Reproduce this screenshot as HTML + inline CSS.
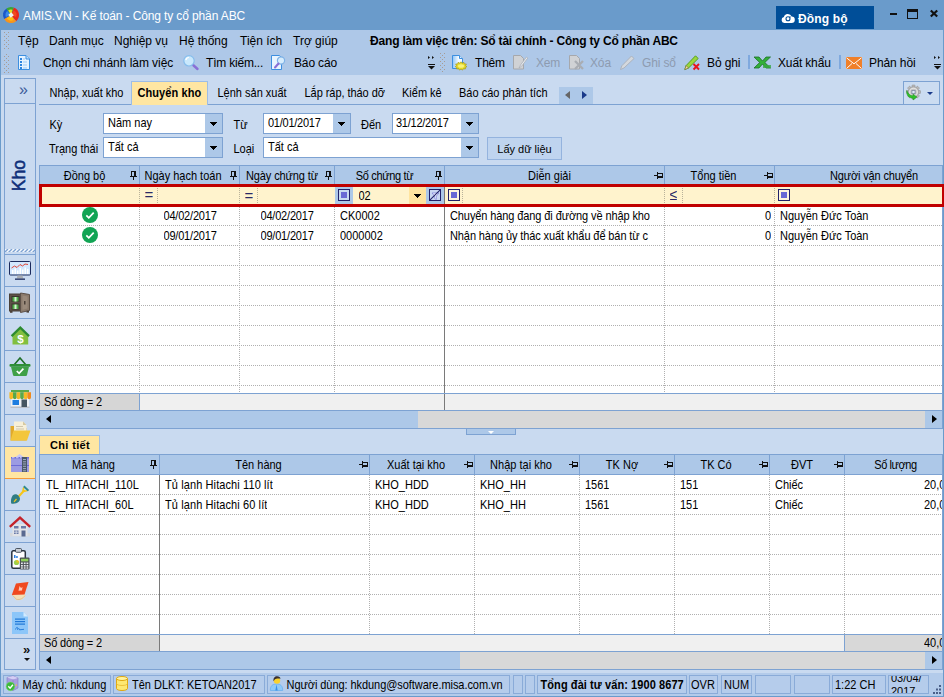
<!DOCTYPE html>
<html><head><meta charset="utf-8"><title>AMIS.VN</title>
<style>
*{box-sizing:border-box;margin:0;padding:0}
html,body{width:944px;height:697px;overflow:hidden}
body{position:relative;background:#6a9bcb;font-family:"Liberation Sans","DejaVu Sans",sans-serif;font-size:12px;color:#000}
.a{position:absolute}
svg{position:absolute;overflow:visible}
.t{position:absolute;white-space:nowrap;line-height:1}
.m{position:absolute;white-space:nowrap;top:30px;height:22px;line-height:22px;font-size:12px;color:#000}
.tb{position:absolute;white-space:nowrap;top:52px;height:22px;line-height:22px;font-size:12px;color:#000}
.tb.g{color:#8d9bb0}
.tab{position:absolute;white-space:nowrap;top:82px;height:22px;line-height:22px;font-size:11px;color:#000}
.lbl{position:absolute;white-space:nowrap;height:20px;line-height:20px;font-size:11px;color:#000}
.inp{position:absolute;height:21px;background:#fff;border:1px solid #7da2d2;font-size:11px;line-height:17px;padding-left:4px;white-space:nowrap}
.dd{position:absolute;right:0;top:0;width:17px;height:19px;background:#adc8e8}
.dd:after,.arr{content:"";position:absolute;left:5px;top:8px;width:7px;height:4px;background:#000;clip-path:polygon(0 0,7px 0,7px 1px,6px 1px,6px 2px,5px 2px,5px 3px,4px 3px,4px 4px,3px 4px,3px 3px,2px 3px,2px 2px,1px 2px,1px 1px,0 1px)}
.h{position:absolute;white-space:nowrap;height:21px;line-height:19px;font-size:11px;text-align:center;background:#adc8e8;border:1px solid #7da2d2;border-left:0;color:#000}
.c{position:absolute;white-space:nowrap;height:19px;line-height:20px;font-size:11px;color:#000;overflow:hidden}
.st{position:absolute;white-space:nowrap;top:675px;height:19px;line-height:18px;font-size:11px;color:#000;border:1px solid #8aabd8;background:#b5cceb;padding-left:3px;overflow:hidden}
.pin{width:7px;height:9px;top:5px;right:2px}
.pinh{width:9px;height:7px;top:6px;right:1px}
.vl{position:absolute;width:1px;background-image:linear-gradient(#b0b0b0 50%,transparent 50%);background-size:1px 2px;background-position:0 1px}
.hl{position:absolute;height:1px;background-image:linear-gradient(90deg,#b0b0b0 50%,transparent 50%);background-size:2px 1px;background-position:1px 0}
.x{display:inline-block;transform:translateY(.5px) scaleY(1.1)}
.c,.lbl,.tab{transform:translateY(.5px) scaleY(1.1)}
.st .x{transform:scaleY(1.1)}
.p0{background-position:0 0!important}
.sep{position:absolute;left:5px;width:30px;height:1px;background:#7da2d2}
</style></head><body>
<div class="a" style="left:0;top:0;width:944px;height:30px;background:#6a9bcb"></div>
<div class="a" style="left:1px;top:30px;width:942px;height:45px;background:#aec8e8"></div>
<div class="a" style="left:1px;top:75px;width:942px;height:598px;background:#c9daf0"></div>
<div class="a" style="left:1px;top:673px;width:942px;height:23px;background:#b3cbea"></div>

<svg style="left:3px;top:7px" width="16" height="16" viewBox="-8 -8 16 16"><path d="M0 0L2.74 -7.52 A8 8 0 0 1 5.14 6.13 Z" fill="#e8281c"/><path d="M0 0L5.14 6.13 A8 8 0 0 1 -6.93 4.00 Z" fill="#f7941d"/><path d="M0 0L-6.93 4.00 A8 8 0 0 1 -4.59 -6.55 Z" fill="#1c57c8"/><path d="M0 0L-4.59 -6.55 A8 8 0 0 1 2.74 -7.52 Z" fill="#3aa635"/><path d="M0 0L2.75 -4.76 A5.5 5.5 0 0 1 5.17 1.88 Z" fill="#f04a1e"/><path d="M0 0L2.75 4.76 A5.5 5.5 0 0 1 -4.21 3.54 Z" fill="#fdc010"/><path d="M0 0L-5.17 1.88 A5.5 5.5 0 0 1 -3.89 -3.89 Z" fill="#3a8ae8"/><path d="M0 0L-2.75 -4.76 A5.5 5.5 0 0 1 1.42 -5.31 Z" fill="#e8e020"/><path d="M-2.600 -.3L.3 -2.800 2.800 .3 -.3 2.800Z" fill="#f2f2f2"/></svg>
<div class="t" style="left:23px;top:1px;height:31px;line-height:31px;font-size:12px;color:#fff;letter-spacing:-.12px">AMIS.VN - Kế toán - Công ty cổ phần ABC</div>
<div class="a" style="left:776px;top:6px;width:98px;height:23px;background:#004e98"></div>
<svg style="left:781px;top:13px" width="14" height="10" viewBox="0 0 14 10"><path d="M3.300 10a3 3 0 0 1-.4-5.900A4 4 0 0 1 10.600 3.600a3.200 3.200 0 0 1 0 6.400Z" fill="#fff"/><circle cx="7" cy="5.800" r="2" fill="none" stroke="#004e98" stroke-width="1.100"/><path d="M8.200 3.200l1.600.3-.6 1.500Z" fill="#004e98"/></svg>
<div class="t" style="left:798px;top:7px;height:23px;line-height:24px;font-size:12px;font-weight:bold;color:#fff;letter-spacing:.15px">Đồng bộ</div>
<div class="a" style="left:890px;top:13px;width:7px;height:2px;background:#111"></div>
<div class="a" style="left:907px;top:9px;width:11px;height:10px;border:1.500px solid #111;border-top-width:3px"></div>
<svg style="left:930px;top:10px" width="8" height="7" viewBox="0 0 8 7"><path d="M.8.500l6.400 6M7.200.500l-6.400 6" stroke="#111" stroke-width="2.200"/></svg>

<svg style="left:4px;top:32px" width="6" height="42" viewBox="0 0 6 42"><defs><pattern id="gp" width="4" height="4" patternUnits="userSpaceOnUse"><rect x="0" y="0" width="1" height="1" fill="#a79c94"/><rect x="2" y="2" width="1" height="1" fill="#a79c94"/></pattern></defs><rect x="0" y="0" width="6" height="18" fill="url(#gp)"/><rect x="0" y="21" width="6" height="20" fill="url(#gp)"/></svg>
<div class="m" style="left:18px">Tệp</div>
<div class="m" style="left:49px">Danh mục</div>
<div class="m" style="left:114px">Nghiệp vụ</div>
<div class="m" style="left:179px">Hệ thống</div>
<div class="m" style="left:240px">Tiện ích</div>
<div class="m" style="left:293px">Trợ giúp</div>
<div class="m" style="left:370px;font-weight:bold;letter-spacing:-.18px">Đang làm việc trên: Sổ tài chính - Công ty Cổ phần ABC</div>
<svg style="left:18px;top:55px" width="12" height="15" viewBox="0 0 12 15"><path d="M.5.500h7.500l3.500 3.500v10.500h-11Z" fill="#e6f3ff" stroke="#3d8fe0"/><path d="M8 .500v3.500h3.500" fill="#bfe0ff" stroke="#3d8fe0"/><g fill="#2f86e0"><rect x="2" y="3" width="2" height="2"/><rect x="2" y="6" width="2" height="2"/><rect x="2" y="9" width="2" height="2"/><rect x="2" y="12" width="2" height="2"/></g><g fill="#9ccaf5"><rect x="5" y="6.500" width="4" height="1"/><rect x="5" y="9.500" width="4" height="1"/><rect x="5" y="12.500" width="4" height="1"/><rect x="5" y="3.500" width="2" height="1"/></g></svg>
<div class="tb" style="left:43px;letter-spacing:-.05px">Chọn chi nhánh làm việc</div>
<svg style="left:183px;top:55px" width="16" height="15" viewBox="0 0 16 15"><path d="M9.500 9.500l5 4.500" stroke="#8a6fd6" stroke-width="2.400" stroke-linecap="round"/><circle cx="6" cy="5.800" r="5.200" fill="#c9e8fc" stroke="#86bdec" stroke-width="1.200"/><path d="M2.800 5a3.400 3.400 0 0 1 3-2.600" stroke="#fff" stroke-width="1.400" fill="none"/></svg>
<div class="tb" style="left:206px;letter-spacing:-.2px">Tìm kiếm...</div>
<svg style="left:271px;top:55px" width="15" height="15" viewBox="0 0 15 15"><path d="M.5.500h8l2 2v12h-10Z" fill="#e8f4ff" stroke="#3d8fe0"/><circle cx="10" cy="5.500" r="3.600" fill="#d6ecfc" stroke="#7fb2e6" stroke-width="1.200"/><path d="M7.500 8.500l-3.500 4" stroke="#8a6fd6" stroke-width="2" stroke-linecap="round"/></svg>
<div class="tb" style="left:294px;letter-spacing:-.15px">Báo cáo</div>
<svg style="left:427px;top:56px" width="9" height="14" viewBox="0 0 9 14"><path d="M1 0l2 1.500-2 1.500ZM5 0l2 1.500-2 1.500Z" fill="#111"/><rect x="1" y="8" width="7" height="1" fill="#111"/><path d="M1 10h7l-3.500 3.500Z" fill="#111"/></svg>
<svg style="left:440px;top:53px" width="5" height="20" viewBox="0 0 5 20"><rect width="5" height="20" fill="url(#gp)"/></svg>
<svg style="left:452px;top:55px" width="16" height="15" viewBox="0 0 16 15"><defs><linearGradient id="dg" x1="0" x2="1" y1="0" y2="0"><stop offset="0" stop-color="#8cc4f8"/><stop offset=".6" stop-color="#f4faff"/></linearGradient></defs><path d="M.5.500h7l3 3v10h-10Z" fill="url(#dg)" stroke="#3d8fe0"/><path d="M7.500.500v3h3" fill="#d6ebff" stroke="#3d8fe0"/><path d="M9 6.800l1.200 1.400 1.700-.9.300 1.600 2.200.1-.9 1.500 1.400 1.200-1.800.7.300 1.600-2-.3-.9 1.400-1.500-1.100-1.500 1.100-.9-1.400-2 .3.300-1.600-1.800-.7 1.400-1.200-.9-1.500 2.200-.1.300-1.600 1.700.9Z" fill="#e6dc2a" stroke="#a89812" stroke-width=".7"/><ellipse cx="9" cy="11" rx="3" ry="1.800" fill="#f8f27a"/></svg>
<div class="tb" style="left:475px;letter-spacing:-.2px">Thêm</div>
<svg style="left:513px;top:55px" width="15" height="15" viewBox="0 0 15 15"><path d="M.5.500h7l3 3v10.500h-10Z" fill="#d0d2d5" stroke="#a6a8ac"/><path d="M13.500 2l-6 8-1.500 3 2.800-2 6-8Z" fill="#e9ecef" stroke="#a9afb8" stroke-width=".8"/></svg>
<div class="tb g" style="left:536px;letter-spacing:-.2px">Xem</div>
<svg style="left:569px;top:55px" width="15" height="15" viewBox="0 0 15 15"><path d="M.5.500h7l3 3v10.500h-10Z" fill="#d0d2d5" stroke="#a6a8ac"/><path d="M6 6l8 8M14 6l-8 8" stroke="#a9adb3" stroke-width="2.300"/></svg>
<div class="tb g" style="left:590px;letter-spacing:-.15px">Xóa</div>
<svg style="left:619px;top:55px" width="16" height="15" viewBox="0 0 16 15"><path d="M12.500 1l2.500 2.500-10 9.500-3.500 1.500 1.300-3.700Z" fill="#d4d8dd" stroke="#a9afb8" stroke-width=".9"/></svg>
<div class="tb g" style="left:642px;letter-spacing:-.15px">Ghi sổ</div>
<svg style="left:684px;top:55px" width="16" height="15" viewBox="0 0 16 15"><path d="M11.500.800l2.700 2.700-9.700 9.500-3.700 1.500 1.300-3.900Z" fill="#9bd63c" stroke="#4e9a16" stroke-width=".9"/><path d="M.8 14.500l1.300-3.900 2.400 2.400Z" fill="#f4dca0" stroke="#6b5a2a" stroke-width=".5"/><path d="M9.500 9l5.500 5.500M15 9l-5.500 5.500" stroke="#e8141c" stroke-width="1.900"/></svg>
<div class="tb" style="left:707px;letter-spacing:-.1px">Bỏ ghi</div>
<div class="a" style="left:748px;top:55px;width:2px;height:14px;background:#7fa9de"></div>
<svg style="left:754px;top:56px" width="17" height="13" viewBox="0 0 17 13"><path d="M0 1h5l3.500 4L12 1h4.500l-5.700 5.500 5.700 5.500H12L8.500 8 5 12H0l5.700-5.500Z" fill="#33b03a" stroke="#1b6e24" stroke-width=".8"/><path d="M9 9h8v3H9Z" fill="#3aa845" opacity=".8"/></svg>
<div class="tb" style="left:778px;letter-spacing:-.15px">Xuất khẩu</div>
<div class="a" style="left:839px;top:55px;width:2px;height:14px;background:#7fa9de"></div>
<svg style="left:846px;top:57px" width="16" height="12" viewBox="0 0 16 12"><rect width="16" height="12" fill="#f0802a"/><path d="M.5.800l7.500 6 7.500-6M.5 11.500l5.500-5M15.500 11.500l-5.500-5" stroke="#fff" stroke-width="1" fill="none"/></svg>
<div class="tb" style="left:869px;letter-spacing:-.1px">Phản hồi</div>
<svg style="left:933px;top:56px" width="9" height="14" viewBox="0 0 9 14"><path d="M1 0l2 1.500-2 1.500ZM5 0l2 1.500-2 1.500Z" fill="#111"/><rect x="1" y="8" width="7" height="1" fill="#111"/><path d="M1 10h7l-3.500 3.500Z" fill="#111"/></svg>

<div class="a" style="left:39px;top:104px;width:865px;height:1px;background:#7da2d2"></div>
<div class="tab" style="left:49.500px;top:81px">Nhập, xuất kho</div>
<div class="a" style="left:131px;top:81px;width:77px;height:24px;background:#ffe6a2;border:1px solid #9dbde6;border-bottom:0"></div>
<div class="tab" style="left:137.500px;top:81px;font-weight:bold;letter-spacing:.08px">Chuyển kho</div>
<div class="tab" style="left:217.500px;top:81px">Lệnh sản xuất</div>
<div class="tab" style="left:304.500px;top:81px;letter-spacing:-.05px">Lắp ráp, tháo dỡ</div>
<div class="tab" style="left:402px;top:81px">Kiểm kê</div>
<div class="tab" style="left:459px;top:81px">Báo cáo phân tích</div>
<div class="a" style="left:559px;top:87px;width:34px;height:17px;background:#adc8e8"></div>
<div class="a" style="left:565px;top:91px;border:4.500px solid transparent;border-right:5px solid #666;border-left:0"></div>
<div class="a" style="left:582px;top:91px;border:4.500px solid transparent;border-left:5px solid #1a3a8a;border-right:0"></div>
<div class="a" style="left:903px;top:81px;width:37px;height:24px;border:1px solid #7da2d2;background:#cbdcf1"></div>
<svg style="left:906px;top:85px" width="15" height="15" viewBox="0 0 15 15"><g transform="translate(7.500 7)"><g fill="#b9b9b9" stroke="#8e8e8e" stroke-width=".5"><rect x="-1.500" y="-7" width="3" height="14" rx=".5"/><rect x="-1.500" y="-7" width="3" height="14" rx=".5" transform="rotate(45)"/><rect x="-1.500" y="-7" width="3" height="14" rx=".5" transform="rotate(90)"/><rect x="-1.500" y="-7" width="3" height="14" rx=".5" transform="rotate(135)"/></g><circle r="5.200" fill="#c4c4c4" stroke="#8e8e8e" stroke-width=".5"/><circle r="3.800" fill="none" stroke="#e4e4e4" stroke-width="1.100"/><rect x="-1.600" y="-1.600" width="3.200" height="3.200" fill="#dfe9f8" stroke="#7f8aa0" stroke-width=".8"/></g><path d="M.8 5.500C.2 10 2.600 13 7 13.300V15l4-3-4-2.800v1.600C4.300 10.700 2.200 9 .8 5.500Z" fill="#2fc22a" stroke="#1d8a1a" stroke-width=".5"/></svg>
<div class="a" style="left:927px;top:92px;border:3px solid transparent;border-top:3px solid #1a3a8a;border-bottom:0"></div>

<div class="a" style="left:4px;top:78px;width:32px;height:592px;border:1px solid #7da2d2;background:#c9daf0"></div>
<div class="sep" style="top:103px"></div>
<div class="t" style="left:19px;top:82px;font-size:16px;color:#3d5a9a;letter-spacing:-1px">»</div>
<div class="t" style="left:2.5px;top:166.5px;width:32px;height:17px;font-size:17.6px;color:#10307a;-webkit-text-stroke:.55px #10307a;transform:rotate(-90deg);text-align:center">Kho</div>
<svg style="left:5px;top:249px" width="30" height="3" viewBox="0 0 30 3"><defs><pattern id="sg" width="4" height="4" patternUnits="userSpaceOnUse"><rect width="4" height="4" fill="#f4f8fd"/><path d="M-1 4l4-4M3 4l4-4" stroke="#7da2d2" stroke-width="1.400"/></pattern></defs><rect width="30" height="3" fill="url(#sg)"/></svg>
<div class="a" style="left:5px;top:447px;width:30px;height:31px;background:#ffe6a2"></div>
<div class="a" style="left:5px;top:478px;width:30px;height:1px;background:#f59a3a"></div>
<div class="sep" style="top:254px"></div>
<div class="sep" style="top:286px"></div>
<div class="sep" style="top:318px"></div>
<div class="sep" style="top:350px"></div>
<div class="sep" style="top:382px"></div>
<div class="sep" style="top:414px"></div>
<div class="sep" style="top:446px"></div>
<div class="sep" style="top:510px"></div>
<div class="sep" style="top:542px"></div>
<div class="sep" style="top:574px"></div>
<div class="sep" style="top:606px"></div>
<div class="sep" style="top:638px"></div>

<svg style="left:9px;top:261px" width="22" height="19" viewBox="0 0 22 19"><rect x=".5" y=".5" width="21" height="13.500" rx="1" fill="#d3e8ff" stroke="#1b2a5c"/><g fill="#fff"><rect x="3" y="9" width="1.500" height="4"/><rect x="5.500" y="7.500" width="1.500" height="5.500"/><rect x="8" y="9.500" width="1.500" height="3.500"/><rect x="10.500" y="7" width="1.500" height="6"/><rect x="13" y="8.500" width="1.500" height="4.500"/><rect x="15.500" y="6.500" width="1.500" height="6.500"/><rect x="18" y="8" width="1.500" height="5"/></g><path d="M2.500 7l3-2 2.500 1.500 3-3 2.500 1.500 2.500-2 3 .5" stroke="#e0483a" stroke-width="1" fill="none"/><path d="M8.500 14.500h5l.8 3h-6.600Z" fill="#a9adb3"/><rect x="6" y="17.500" width="10" height="1.300" fill="#1b2a5c"/></svg>
<svg style="left:9px;top:292px" width="22" height="21" viewBox="0 0 22 21"><rect x=".5" y="2" width="12" height="17" fill="#5d5148" stroke="#4a4038"/><rect x="2.500" y="4" width="8" height="6" fill="#3c342e"/><rect x="2.500" y="11.500" width="8" height="6" fill="#3c342e"/><rect x="3.500" y="5" width="6" height="4.500" fill="#4fae4a"/><rect x="5.500" y="5" width="2" height="4.500" fill="#d7f0d0"/><rect x="3.500" y="12.500" width="6" height="4.500" fill="#4fae4a"/><rect x="5.500" y="12.500" width="2" height="4.500" fill="#d7f0d0"/><path d="M11.500 1l9 1.500v16l-9 2Z" fill="#8a7a6c" stroke="#5d5148"/><path d="M13.500 3.500l5 1v12l-5 1.200Z" fill="#9a8a7b"/><rect x="15" y="9" width="1.500" height="3.500" fill="#4a4038"/><rect x="1" y="19" width="2.500" height="1.800" fill="#4a4038"/><rect x="17.500" y="18.800" width="2.500" height="1.800" fill="#4a4038"/></svg>
<svg style="left:11px;top:326px" width="19" height="19" viewBox="0 0 19 19"><path d="M1.500 9.500L9.300 2.500 17.200 9.500V18.500H1.500Z" fill="#82bf3f"/><path d="M-.2 9.300L9.300 0l9.500 9.300-1.500 1.700-8-7.800-8 7.800Z" fill="#2c8a30"/><text x="9.400" y="17" font-size="11.500" font-weight="bold" fill="#fff" text-anchor="middle" font-family="Liberation Sans,sans-serif">$</text></svg>
<svg style="left:9px;top:357px" width="22" height="19" viewBox="0 0 22 19"><path d="M5 8l6-7 6 7" stroke="#1e6e28" stroke-width="1.600" fill="none"/><rect x=".5" y="7" width="21" height="2.800" rx="1" fill="#2f8f38"/><path d="M2 9.800h18l-2 8.200a1.200 1.200 0 0 1-1.200 1H5.200a1.200 1.200 0 0 1-1.200-1Z" fill="#3fa047"/><path d="M7.800 14l2.300 2.300 4.300-4.600" stroke="#fff" stroke-width="1.700" fill="none"/></svg>
<svg style="left:9px;top:390px" width="22" height="18" viewBox="0 0 22 18"><rect x="2" y="0" width="18" height="2.200" fill="#5aa84a"/><rect x="2" y="8" width="18" height="9" fill="#eef1f4"/><rect x="1.500" y="16.500" width="19" height="1.500" fill="#b8bec6"/><g><path d="M2 2.200h3.600v5.300a1.800 1.800 0 0 1-3.600 0Z" fill="#f6b923" transform="translate(-1.600 0)"/><path d="M5.600 2.200h3.600v5.300a1.800 1.800 0 0 1-3.600 0Z" fill="#5aa84a" transform="translate(-1.600 0)"/><path d="M9.200 2.200h3.600v5.300a1.800 1.800 0 0 1-3.600 0Z" fill="#f6b923" transform="translate(-1.600 0)"/><path d="M12.800 2.200h3.600v5.300a1.800 1.800 0 0 1-3.600 0Z" fill="#5aa84a" transform="translate(-1.600 0)"/><path d="M16.400 2.200h3.600v5.300a1.800 1.800 0 0 1-3.600 0Z" fill="#f6b923" transform="translate(-1.600 0)"/><path d="M20 2.200h3.600v5.300a1.800 1.800 0 0 1-3.600 0Z" fill="#f08a1c" transform="translate(-1.600 0)"/></g><rect x="3.500" y="10" width="6.500" height="5" fill="#1d7de0"/><rect x="12.500" y="9.500" width="5.500" height="7.500" fill="#455560"/></svg>
<svg style="left:10px;top:421px" width="21" height="20" viewBox="0 0 21 20"><path d="M.5 5h6l1.500 2h8.500v12.500H.5Z" fill="#e0a92c"/><path d="M4 .5h9l3.500 3.500v12H4Z" fill="#f7f0d8"/><path d="M13 .5v3.500h3.500Z" fill="#d6c9a0"/><g fill="#cfc6ac"><rect x="6" y="5" width="7" height="1"/><rect x="6" y="7.500" width="8" height="1"/></g><path d="M.5 19.500l3-10h17l-3.500 10Z" fill="#f3c63c"/></svg>
<svg style="left:11px;top:454px" width="18" height="18" viewBox="0 0 18 18"><path d="M4.500 3L8.600 0l4.200 3Z" fill="#c9c8f0"/><rect x="0" y="3" width="18" height="15" fill="#9c9be2"/><rect x="0" y="3" width="18" height="1.500" fill="#6d6cd6"/><path d="M1 3.700h2.500M5 3.700h2.500M9 3.700h1.500" stroke="#e4e4fa" stroke-width=".8"/><rect x="0" y="11" width="18" height="1" fill="#6d6cd6"/><rect x="11" y="3" width="5" height="15" fill="#4a5868"/><path d="M12 5.500h3M12 7.800h3M12 10h3M12 12.300h3M12 14.600h3M12 16.800h3" stroke="#a8b4c8" stroke-width=".9"/></svg>
<svg style="left:10px;top:485px" width="20" height="20" viewBox="0 0 20 20"><path d="M6.500 14L14.500 5" stroke="#f5c518" stroke-width="2"/><path d="M12.800 7l.6-3.800 1.200-.8M13.500 6.500l3.600-.8.800-1.200" stroke="#f5c518" stroke-width="1.500" fill="none"/><path d="M13.800 1.200l4.600 4.400" stroke="#2f8a8f" stroke-width="2"/><path d="M2.800 10.200C5 8.600 7 9 8.500 10.700 10.200 12.500 10.600 14.600 9 16.500 6.800 18.600 3.500 19 1.200 18.400.6 16 1 12.500 2.800 10.200Z" fill="#2f7d84"/><path d="M6.500 14l-2.500 2.800" stroke="#f5c518" stroke-width="1.200"/></svg>
<svg style="left:9px;top:516px" width="22" height="21" viewBox="0 0 22 21"><rect x="1" y="17" width="20" height="3.500" fill="#d5d9de"/><rect x="3.500" y="8" width="15" height="12" fill="#e2e4e8"/><path d="M0 10L11 0l11 10-1.600 1.700L11 3.200 1.600 11.700Z" fill="#c4222a"/><g fill="#6b7ba8"><rect x="5" y="10" width="4.500" height="2.500"/><rect x="12" y="10" width="5" height="2.500"/><rect x="5" y="14.500" width="4.500" height="3.500"/></g><rect x="12.500" y="14.500" width="4" height="6" fill="#5a6a90"/><path d="M7.200 14.500v3.500M5 16.200h4.500" stroke="#eef0f3" stroke-width=".7"/></svg>
<svg style="left:11px;top:548px" width="19" height="22" viewBox="0 0 19 22"><rect x=".8" y="2.800" width="13.500" height="17.500" rx="1.500" fill="#fff" stroke="#2a3440" stroke-width="1.500"/><rect x="4.500" y=".5" width="6" height="3.800" rx="1" fill="#c9ced4" stroke="#2a3440" stroke-width=".8"/><rect x="3" y="7" width="1.500" height="3" fill="#2b7fe0"/><rect x="5.200" y="8" width="1.500" height="2" fill="#2b7fe0"/><circle cx="5.500" cy="14.500" r="2.600" fill="#9bd04a"/><path d="M5.500 14.500V11.900a2.600 2.600 0 0 1 2.600 2.600Z" fill="#f2c21e"/><rect x="8.800" y="9.500" width="9.700" height="12" rx="1" fill="#4a4f55"/><rect x="10" y="10.800" width="7.300" height="2.600" fill="#8fd05a"/><g fill="#e8eaed"><rect x="10" y="14.500" width="1.800" height="1.600"/><rect x="12.800" y="14.500" width="1.800" height="1.600"/><rect x="15.500" y="14.500" width="1.800" height="1.600"/><rect x="10" y="17" width="1.800" height="1.600"/><rect x="12.800" y="17" width="1.800" height="1.600"/><rect x="15.500" y="17" width="1.800" height="1.600"/><rect x="10" y="19.300" width="1.800" height="1.400"/><rect x="12.800" y="19.300" width="1.800" height="1.400"/><rect x="15.500" y="19.300" width="1.800" height="1.400"/></g></svg>
<svg style="left:11px;top:582px" width="18" height="19" viewBox="0 0 18 19"><path d="M1 12.500l4 5.500c4 1 7-.5 9.500-4l-1-2Z" fill="#f3dfb8"/><path d="M1.200 13l4.300 4.300c3.500.8 6.500-.8 8.500-3.800" stroke="#d9b98a" stroke-width=".8" fill="none"/><path d="M5 1.500l12.500-1.500-4 12.500L.8 13Z" fill="#f0491f"/><path d="M8.500 4l1.500 2 1.500-1-.5 3.500-3.500.2Z" fill="#ffd7c8" opacity=".9"/></svg>
<svg style="left:12px;top:612px" width="16" height="22" viewBox="0 0 16 22"><path d="M0 0h11.500L16 4.500V22H0Z" fill="#8cc6f9"/><path d="M11.500 0v4.500H16Z" fill="#d3ebff"/><g fill="#1f78d8"><rect x="3" y="6.500" width="10" height="1.200"/><rect x="3" y="9" width="10" height="1.200"/><rect x="3" y="11.500" width="10" height="1.200"/></g><path d="M3.500 17.500c1-3 2.500-3 2 0 1.500-1.500 2-1 2 .3l4.500-.5" stroke="#1f78d8" stroke-width=".9" fill="none"/></svg>
<div class="t" style="left:23px;top:643px;font-size:13px;font-weight:bold;color:#111;letter-spacing:-1px">»</div>
<div class="a" style="left:24px;top:658px;border:3.500px solid transparent;border-top:3.500px solid #111;border-bottom:0"></div>

<div class="lbl" style="left:49.500px;top:113.500px">Kỳ</div>
<div class="inp" style="left:103px;top:113px;width:120px"><span class="x">Năm nay</span><div class="dd"></div></div>
<div class="lbl" style="left:233.500px;top:113.500px">Từ</div>
<div class="inp" style="left:263px;top:113px;width:88px;letter-spacing:-.25px"><span class="x">01/01/2017</span><div class="dd"></div></div>
<div class="lbl" style="left:361px;top:113.500px">Đến</div>
<div class="inp" style="left:392px;top:113px;width:87px;padding-left:3px;letter-spacing:-.25px"><span class="x">31/12/2017</span><div class="dd"></div></div>
<div class="lbl" style="left:49px;top:138px">Trạng thái</div>
<div class="inp" style="left:103px;top:137px;width:120px"><span class="x">Tất cả</span><div class="dd"></div></div>
<div class="lbl" style="left:233.500px;top:138px">Loại</div>
<div class="inp" style="left:263px;top:137px;width:216px"><span class="x">Tất cả</span><div class="dd"></div></div>
<div class="a" style="left:487px;top:137px;width:75px;height:23px;border:1px solid #94b3de;background:#bfd4ef;font-size:11px;line-height:22px;text-align:center">Lấy dữ liệu</div>

<div class="a" style="left:39px;top:165px;width:903px;height:264px;background:#adc8e8;border:1px solid #7da2d2;border-right:0"></div>
<div class="a" style="left:40px;top:186px;width:902px;height:207px;background:#fff"></div>
<div class="h" style="left:40px;top:165px;width:100px;padding-right:10px"><span class="x">Đồng bộ</span><svg class="pin" viewBox="0 0 7 9"><path d="M1 0h5v5h-2v-4h-2v4h-1ZM0 5h7v1H0ZM3 6h1v3H3Z" fill="#111"/></svg></div>
<div class="h" style="left:140px;top:165px;width:100px;padding-right:13px"><span class="x">Ngày hạch toán</span><svg class="pin" viewBox="0 0 7 9"><path d="M1 0h5v5h-2v-4h-2v4h-1ZM0 5h7v1H0ZM3 6h1v3H3Z" fill="#111"/></svg></div>
<div class="h" style="left:240px;top:165px;width:95px;padding-right:10px;letter-spacing:-.1px"><span class="x">Ngày chứng từ</span><svg class="pin" viewBox="0 0 7 9"><path d="M1 0h5v5h-2v-4h-2v4h-1ZM0 5h7v1H0ZM3 6h1v3H3Z" fill="#111"/></svg></div>
<div class="h" style="left:335px;top:165px;width:110px;padding-right:10px;letter-spacing:-.35px"><span class="x">Số chứng từ</span><svg class="pin" viewBox="0 0 7 9"><path d="M1 0h5v5h-2v-4h-2v4h-1ZM0 5h7v1H0ZM3 6h1v3H3Z" fill="#111"/></svg></div>
<div class="h" style="left:445px;top:165px;width:220px;padding-right:10px"><span class="x">Diễn giải</span><svg class="pinh" viewBox="0 0 9 7"><path d="M0 3h3v1H0ZM3 0h1v7H3ZM4 1h5v5H4v-2h4v-2H4Z" fill="#111"/></svg></div>
<div class="h" style="left:665px;top:165px;width:110px;padding-right:12px"><span class="x">Tổng tiền</span><svg class="pinh" viewBox="0 0 9 7"><path d="M0 3h3v1H0ZM3 0h1v7H3ZM4 1h5v5H4v-2h4v-2H4Z" fill="#111"/></svg></div>
<div class="h" style="left:775px;top:165px;width:167px;border-right:0;padding-left:31px;letter-spacing:-.15px"><span class="x">Người vận chuyển</span></div>
<div class="a" style="left:40px;top:186px;width:902px;height:19px;background:#fff3cd"></div>
<div class="a" style="left:335px;top:186px;width:18px;height:19px;background:#adc8e8"></div>
<div class="a" style="left:409px;top:186px;width:17px;height:19px;background:#ffe4a0"></div>
<div class="a" style="left:426px;top:186px;width:18px;height:19px;background:#adc8e8"></div>
<div class="arr" style="left:414px;top:194px"></div>
<svg style="left:338px;top:189px" width="12" height="12" viewBox="0 0 12 12"><rect x=".5" y=".5" width="11" height="11" fill="#fff" fill-opacity=".35" stroke="#22226a"/><rect x="3" y="3" width="6" height="6" fill="#6a6ad4"/></svg><svg style="left:448px;top:189px" width="12" height="12" viewBox="0 0 12 12"><rect x=".5" y=".5" width="11" height="11" fill="#fff" fill-opacity=".35" stroke="#22226a"/><rect x="3" y="3" width="6" height="6" fill="#6a6ad4"/></svg><svg style="left:778px;top:189px" width="12" height="12" viewBox="0 0 12 12"><rect x=".5" y=".5" width="11" height="11" fill="#fff" fill-opacity=".35" stroke="#22226a"/><rect x="3" y="3" width="6" height="6" fill="#6a6ad4"/></svg>
<svg style="left:429px;top:189px" width="12" height="12" viewBox="0 0 12 12"><rect x=".5" y=".5" width="11" height="11" fill="#c9d6f2" stroke="#22226a"/><path d="M3 4h7l-2.700 3v3.500l-1.600-1v-2.500Z" fill="#f2f5ff" stroke="#6a6ad4" stroke-width=".6"/><path d="M.8 11.200L11.200.8" stroke="#22226a" stroke-width="1.100"/></svg>
<div class="c" style="left:144.500px;top:185px;font-size:15px;color:#2a2a66;line-height:19px;transform:scaleX(1);">=</div>
<div class="c" style="left:244.500px;top:185px;font-size:15px;color:#2a2a66;line-height:19px">=</div>
<div class="c" style="left:358.500px;top:185px">02</div>
<div class="c" style="left:669.500px;top:185px;font-size:14px;color:#2a2a66;line-height:19px">≤</div>
<div class="vl" style="left:139px;top:187px;height:18px;background-image:linear-gradient(#b9b29a 50%,#fff3cd 50%)"></div>
<div class="vl" style="left:157px;top:187px;height:18px;background-image:linear-gradient(#b9b29a 50%,#fff3cd 50%)"></div>
<div class="vl" style="left:239px;top:187px;height:18px;background-image:linear-gradient(#b9b29a 50%,#fff3cd 50%)"></div>
<div class="vl" style="left:257px;top:187px;height:18px;background-image:linear-gradient(#b9b29a 50%,#fff3cd 50%)"></div>
<div class="vl" style="left:462px;top:187px;height:18px;background-image:linear-gradient(#b9b29a 50%,#fff3cd 50%)"></div>
<div class="vl" style="left:664px;top:187px;height:18px;background-image:linear-gradient(#b9b29a 50%,#fff3cd 50%)"></div>
<div class="vl" style="left:682px;top:187px;height:18px;background-image:linear-gradient(#b9b29a 50%,#fff3cd 50%)"></div>
<div class="vl" style="left:774px;top:187px;height:18px;background-image:linear-gradient(#b9b29a 50%,#fff3cd 50%)"></div>
<svg style="left:82px;top:207px" width="16" height="16" viewBox="0 0 16 16"><circle cx="8" cy="8" r="8" fill="#12a454"/><path d="M4.300 8.300l2.500 2.500 4.900-5.200" stroke="#fff" stroke-width="1.700" fill="none"/></svg>
<div class="c" style="left:163.500px;top:205px;letter-spacing:-.2px">04/02/2017</div>
<div class="c" style="left:260.500px;top:205px;letter-spacing:-.2px">04/02/2017</div>
<div class="c" style="left:340px;top:205px">CK0002</div>
<div class="c" style="left:450px;top:205px;width:214px;letter-spacing:-.1px">Chuyển hàng đang đi đường về nhập kho</div>
<div class="c" style="left:665px;top:205px;width:106px;text-align:right">0</div>
<div class="c" style="left:780px;top:205px">Nguyễn Đức Toàn</div>
<svg style="left:82px;top:227px" width="16" height="16" viewBox="0 0 16 16"><circle cx="8" cy="8" r="8" fill="#12a454"/><path d="M4.300 8.300l2.500 2.500 4.900-5.200" stroke="#fff" stroke-width="1.700" fill="none"/></svg>
<div class="c" style="left:163.500px;top:225px;letter-spacing:-.2px">09/01/2017</div>
<div class="c" style="left:260.500px;top:225px;letter-spacing:-.2px">09/01/2017</div>
<div class="c" style="left:340px;top:225px">0000002</div>
<div class="c" style="left:450px;top:225px;width:214px;letter-spacing:-.1px">Nhận hàng ủy thác xuất khẩu để bán từ c</div>
<div class="c" style="left:665px;top:225px;width:106px;text-align:right">0</div>
<div class="c" style="left:780px;top:225px">Nguyễn Đức Toàn</div>
<div class="hl" style="left:40px;top:225px;width:902px"></div>
<div class="hl" style="left:40px;top:245px;width:902px"></div>
<div class="hl" style="left:40px;top:265px;width:902px"></div>
<div class="hl" style="left:40px;top:285px;width:902px"></div>
<div class="hl" style="left:40px;top:305px;width:902px"></div>
<div class="hl" style="left:40px;top:325px;width:902px"></div>
<div class="hl" style="left:40px;top:345px;width:902px"></div>
<div class="hl" style="left:40px;top:365px;width:902px"></div>
<div class="hl" style="left:40px;top:385px;width:902px"></div>
<div class="vl" style="left:139px;top:206px;height:187px"></div>
<div class="vl" style="left:239px;top:206px;height:187px"></div>
<div class="vl" style="left:334px;top:206px;height:187px"></div>
<div class="vl" style="left:664px;top:206px;height:187px"></div>
<div class="vl" style="left:774px;top:206px;height:187px"></div>
<div class="a" style="left:444px;top:186px;width:1px;height:224px;background:#7a7a7a"></div>
<div class="a" style="left:40px;top:393px;width:902px;height:1px;background:#7da2d2"></div>
<div class="a" style="left:40px;top:394px;width:902px;height:16px;background:#f0f0f0"></div>
<div class="a" style="left:40px;top:394px;width:99px;height:16px;background:#d6d6d6"></div>
<div class="a" style="left:139px;top:394px;width:1px;height:16px;background:#7da2d2"></div>
<div class="a" style="left:40px;top:410px;width:902px;height:1px;background:#7da2d2"></div>
<div class="c" style="left:44px;top:391px;letter-spacing:-.15px">Số dòng = 2</div>
<div class="a" style="left:444px;top:394px;width:1px;height:16px;background:#7a7a7a"></div>
<div class="a" style="left:418px;top:411px;width:507px;height:17px;background:#d8d8d8"></div>
<div class="a" style="left:46px;top:415px;border:4px solid transparent;border-right:5px solid #000;border-left:0"></div>
<div class="a" style="left:932px;top:415px;border:4px solid transparent;border-left:5px solid #000;border-right:0"></div>
<div class="a" style="left:466px;top:429px;width:50px;height:6px;background:#adc8e8;border:1px solid #7da2d2;border-top:0"></div>
<div class="a" style="left:487.500px;top:430.500px;border:3.500px solid transparent;border-top:3.500px solid #fff;border-bottom:0"></div>

<div class="a" style="left:39px;top:435px;width:61px;height:20px;background:#ffe6a2;border:1px solid #9dbde6;border-bottom:0"></div>
<div class="t" style="left:50px;top:435px;height:20px;line-height:20px;font-weight:bold;font-size:11px;letter-spacing:.35px">Chi tiết</div>
<div class="a" style="left:39px;top:454px;width:903px;height:216px;background:#adc8e8;border:1px solid #7da2d2;border-right:0"></div>
<div class="a" style="left:40px;top:475px;width:902px;height:159px;background:#fff"></div>
<div class="h" style="left:40px;top:454px;width:120px;padding-right:12px"><span class="x">Mã hàng</span><svg class="pin" viewBox="0 0 7 9"><path d="M1 0h5v5h-2v-4h-2v4h-1ZM0 5h7v1H0ZM3 6h1v3H3Z" fill="#111"/></svg></div>
<div class="h" style="left:160px;top:454px;width:210px;padding-right:12px"><span class="x">Tên hàng</span><svg class="pinh" viewBox="0 0 9 7"><path d="M0 3h3v1H0ZM3 0h1v7H3ZM4 1h5v5H4v-2h4v-2H4Z" fill="#111"/></svg></div>
<div class="h" style="left:370px;top:454px;width:105px;padding-right:12px"><span class="x">Xuất tại kho</span><svg class="pinh" viewBox="0 0 9 7"><path d="M0 3h3v1H0ZM3 0h1v7H3ZM4 1h5v5H4v-2h4v-2H4Z" fill="#111"/></svg></div>
<div class="h" style="left:475px;top:454px;width:105px;padding-right:12px"><span class="x">Nhập tại kho</span><svg class="pinh" viewBox="0 0 9 7"><path d="M0 3h3v1H0ZM3 0h1v7H3ZM4 1h5v5H4v-2h4v-2H4Z" fill="#111"/></svg></div>
<div class="h" style="left:580px;top:454px;width:95px;padding-right:10px"><span class="x">TK Nợ</span><svg class="pinh" viewBox="0 0 9 7"><path d="M0 3h3v1H0ZM3 0h1v7H3ZM4 1h5v5H4v-2h4v-2H4Z" fill="#111"/></svg></div>
<div class="h" style="left:675px;top:454px;width:95px;padding-right:12px"><span class="x">TK Có</span><svg class="pinh" viewBox="0 0 9 7"><path d="M0 3h3v1H0ZM3 0h1v7H3ZM4 1h5v5H4v-2h4v-2H4Z" fill="#111"/></svg></div>
<div class="h" style="left:770px;top:454px;width:75px;padding-right:10px"><span class="x">ĐVT</span><svg class="pinh" viewBox="0 0 9 7"><path d="M0 3h3v1H0ZM3 0h1v7H3ZM4 1h5v5H4v-2h4v-2H4Z" fill="#111"/></svg></div>
<div class="h" style="left:845px;top:454px;width:97px;border-right:0;padding-left:4px;letter-spacing:-.4px"><span class="x">Số lượng</span></div>
<div class="c" style="left:46px;top:474px;letter-spacing:.07px">TL_HITACHI_110L</div>
<div class="c" style="left:165px;top:474px;letter-spacing:.1px">Tủ lạnh Hitachi 110 lít</div>
<div class="c" style="left:375px;top:474px">KHO_HDD</div>
<div class="c" style="left:480px;top:474px">KHO_HH</div>
<div class="c" style="left:585px;top:474px">1561</div>
<div class="c" style="left:680px;top:474px">151</div>
<div class="c" style="left:775px;top:474px">Chiếc</div>
<div class="c" style="left:924px;top:474px;width:18px">20,00</div>
<div class="c" style="left:46px;top:494px;letter-spacing:.07px">TL_HITACHI_60L</div>
<div class="c" style="left:165px;top:494px;letter-spacing:.1px">Tủ lạnh Hitachi 60 lít</div>
<div class="c" style="left:375px;top:494px">KHO_HDD</div>
<div class="c" style="left:480px;top:494px">KHO_HH</div>
<div class="c" style="left:585px;top:494px">1561</div>
<div class="c" style="left:680px;top:494px">151</div>
<div class="c" style="left:775px;top:494px">Chiếc</div>
<div class="c" style="left:924px;top:494px;width:18px">20,00</div>
<div class="hl p0" style="left:40px;top:494px;width:902px"></div>
<div class="hl p0" style="left:40px;top:514px;width:902px"></div>
<div class="hl p0" style="left:40px;top:534px;width:902px"></div>
<div class="hl p0" style="left:40px;top:554px;width:902px"></div>
<div class="hl p0" style="left:40px;top:574px;width:902px"></div>
<div class="hl p0" style="left:40px;top:594px;width:902px"></div>
<div class="hl p0" style="left:40px;top:614px;width:902px"></div>
<div class="vl p0" style="left:369px;top:475px;height:159px"></div>
<div class="vl p0" style="left:474px;top:475px;height:159px"></div>
<div class="vl p0" style="left:579px;top:475px;height:159px"></div>
<div class="vl p0" style="left:674px;top:475px;height:159px"></div>
<div class="vl p0" style="left:769px;top:475px;height:159px"></div>
<div class="vl p0" style="left:844px;top:475px;height:159px"></div>
<div class="a" style="left:159px;top:475px;width:1px;height:176px;background:#7a7a7a"></div>
<div class="a" style="left:40px;top:634px;width:902px;height:1px;background:#7da2d2"></div>
<div class="a" style="left:40px;top:635px;width:902px;height:16px;background:#f0f0f0"></div>
<div class="a" style="left:40px;top:635px;width:119px;height:16px;background:#d6d6d6"></div>
<div class="a" style="left:844px;top:635px;width:98px;height:16px;background:#d8d8d8;border-left:1px solid #7da2d2"></div>
<div class="a" style="left:40px;top:651px;width:902px;height:1px;background:#7da2d2"></div>
<div class="a" style="left:159px;top:635px;width:1px;height:16px;background:#7a7a7a"></div>
<div class="c" style="left:44px;top:632px;letter-spacing:-.15px">Số dòng = 2</div>
<div class="c" style="left:924px;top:632px;width:18px">40,00</div>
<div class="a" style="left:460px;top:652px;width:465px;height:17px;background:#d8d8d8"></div>
<div class="a" style="left:46px;top:656px;border:4px solid transparent;border-right:5px solid #000;border-left:0"></div>
<div class="a" style="left:932px;top:656px;border:4px solid transparent;border-left:5px solid #000;border-right:0"></div>

<div class="st" style="left:3px;width:108px;padding-left:18.500px"><span class="x">Máy chủ: hkdung</span></div>
<div class="st" style="left:113px;width:152px;padding-left:18px"><span class="x">Tên DLKT: KETOAN2017</span></div>
<div class="st" style="left:267px;width:243px;padding-left:18.500px;letter-spacing:-.06px"><span class="x">Người dùng: hkdung@software.misa.com.vn</span></div>
<div class="st" style="left:513px;width:10px"></div>
<div class="st" style="left:525px;width:10px"></div>
<div class="st" style="left:537px;width:150px;font-weight:bold;padding-left:2.500px;letter-spacing:.08px"><span class="x">Tổng đài tư vấn: 1900 8677</span></div>
<div class="st" style="left:689px;width:29px;padding-left:1px"><span class="x">OVR</span></div>
<div class="st" style="left:721px;width:31px;padding-left:2px"><span class="x">NUM</span></div>
<div class="st" style="left:755px;width:36px"></div>
<div class="st" style="left:794px;width:36px"></div>
<div class="st" style="left:832px;width:54px;padding-left:2px"><span class="x">1:22 CH</span></div>
<div class="st" style="left:888px;width:41px;white-space:normal;line-height:13px;padding-left:2px"><div style="margin-top:-4px">03/04/ 2017</div></div>
<svg style="left:6px;top:676px" width="13" height="15" viewBox="0 0 13 15"><path d="M1 1.500l6-1.500 5 2v10l-5 2.500-6-2Z" fill="#a79ede" stroke="#8278c4" stroke-width=".6"/><path d="M1 1.500l6-1.500 5 2-5 1.500Z" fill="#d4cef4"/><path d="M7 3.500v11" stroke="#8278c4" stroke-width=".6"/><rect x="9.800" y="8.500" width="1.200" height="1.200" fill="#f8c820"/><circle cx="4.500" cy="10.400" r="4.300" fill="#3cb83a" stroke="#78d870" stroke-width=".6"/><path d="M2.300 10.200l1.800 2 2.800-3.400" stroke="#fff" stroke-width="1.400" fill="none"/></svg>
<svg style="left:116px;top:676px" width="12" height="15" viewBox="0 0 12 15"><path d="M.5 2.500v10c0 1.200 2.500 2 5.500 2s5.500-.8 5.500-2v-10Z" fill="#fde872" stroke="#e0a810"/><ellipse cx="6" cy="2.500" rx="5.500" ry="2" fill="#fff3a0" stroke="#e0a810"/><path d="M.5 7.500c0 1.200 2.500 2 5.500 2s5.500-.8 5.500-2" fill="none" stroke="#e8b830" stroke-width=".8"/></svg>
<svg style="left:270px;top:676px" width="13" height="15" viewBox="0 0 13 15"><path d="M.3 14.500c0-4.500 2-6.500 6.200-6.500s6.200 2 6.200 6.500Z" fill="#8fcaf8" stroke="#5aa8ec" stroke-width=".6"/><path d="M6.500 8.500l1.200 6h-2.400Z" fill="#3a90e8"/><circle cx="7" cy="4.600" r="3.200" fill="#f8d22e"/><path d="M3.600 5.200c-.6-3 1-5 3.600-5 2 0 3.200 1 3.300 2.600-2-.6-4.400-.4-5.500.4-.6.500-.9 1.200-1.400 2Z" fill="#3a3030"/></svg>
<svg style="left:932px;top:685px" width="10" height="10" viewBox="0 0 10 10"><g fill="#4a5f88"><rect x="7" y="0" width="2" height="2"/><rect x="4" y="3.500" width="2" height="2"/><rect x="7" y="3.500" width="2" height="2"/><rect x="1" y="7" width="2" height="2"/><rect x="4" y="7" width="2" height="2"/><rect x="7" y="7" width="2" height="2"/></g></svg>
<div class="a" style="left:0;top:30px;width:1px;height:667px;background:#6a9bcb"></div>
<div class="a" style="left:942px;top:165px;width:1px;height:264px;background:#7da2d2"></div>
<div class="a" style="left:942px;top:454px;width:1px;height:216px;background:#7da2d2"></div>
<div class="a" style="left:943px;top:30px;width:1px;height:667px;background:#6a9bcb"></div>
<div class="a" style="left:0;top:696px;width:944px;height:1px;background:#6a9bcb"></div>
<svg style="left:39px;top:184px" width="905" height="23" viewBox="0 0 905 23"><rect x="1.500" y="1.500" width="903" height="20" fill="none" stroke="#c00000" stroke-width="3"/></svg>
</body></html>
